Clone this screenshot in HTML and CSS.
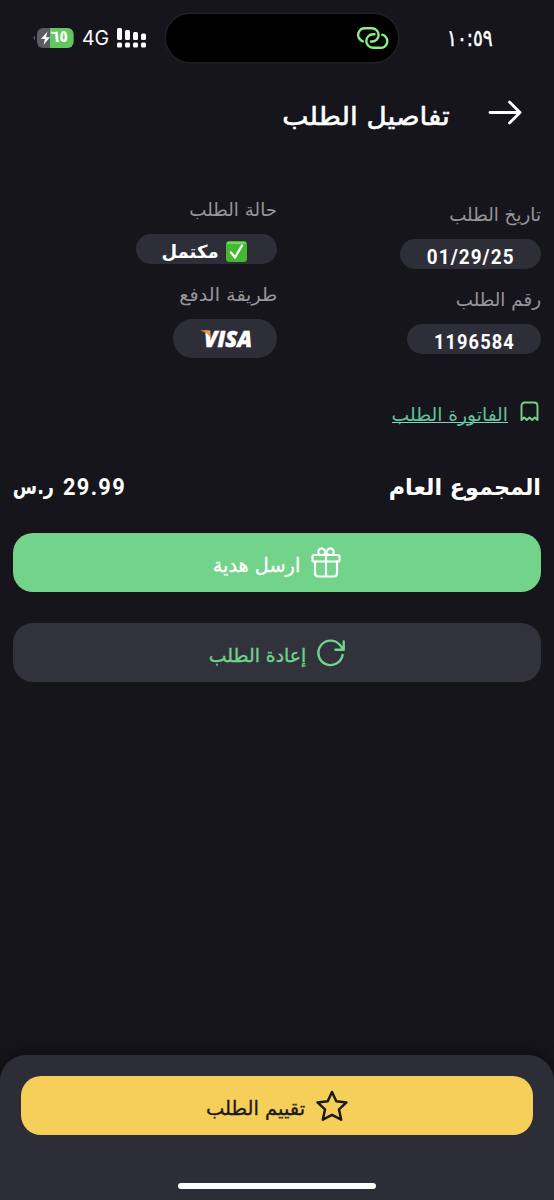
FILE: index.html
```html
<!DOCTYPE html>
<html lang="ar" dir="rtl">
<head>
<meta charset="utf-8">
<title>تفاصيل الطلب</title>
<link rel="stylesheet" href="styles.css">
</head>
<body>
<div class="screen">
  <div class="status">
    <span class="clock" dir="ltr">١٠:٥٩</span>
    <div class="island">
      <svg class="link-icon" viewBox="0 0 29 22" fill="none" stroke="#86f283" stroke-width="2.4" stroke-linecap="round"><path d="M4.800 14.300A6.700 6.700 0 0 1 7.900 1.300H14A6.600 6.600 0 0 1 14 14.500H13"/><path d="M24.300 7.700A6.700 6.700 0 0 1 21 20.700H15A6.700 6.700 0 0 1 15 7.300H16.500"/></svg>
    </div>
    <div class="indicators" dir="ltr">
      <svg class="battery" viewBox="0 0 41 20"><path d="M2 7.500Q-1 10 2 12.500Z" fill="#5c5c60"/><rect x="4" width="36.500" height="20" rx="6" fill="#5c5c60"/><path d="M17 0H34.500A6 6 0 0 1 40.500 6V14A6 6 0 0 1 34.500 20H17Z" fill="#61c75f"/><path d="M14.500 3.500L8 11H12L10.500 17L17 9.300H13Z" fill="#fff"/></svg>
      <span class="charge">٦٥</span>
      <span class="network">4G</span>
      <svg class="signal" viewBox="0 0 29 20" fill="#fff"><rect x="0" y="0" width="5" height="12" rx="1.500"/><rect x="8" y="2" width="5" height="10" rx="1.500"/><rect x="16" y="4" width="5" height="8" rx="1.500"/><rect x="24" y="5.500" width="5" height="6.500" rx="1.500"/><rect x="0" y="14.500" width="5" height="5" rx="1.500"/><rect x="8" y="14.500" width="5" height="5" rx="1.500"/><rect x="16" y="14.500" width="5" height="5" rx="1.500"/><rect x="24" y="14.500" width="5" height="5" rx="1.500"/></svg>
    </div>
  </div>

  <header class="header">
    <svg class="arrow" viewBox="0 0 34 26" fill="none" stroke="#fff" stroke-width="2.800" stroke-linecap="round" stroke-linejoin="round"><path d="M2 12.500H32M21.500 2L32 12.500L21.500 23"/></svg>
    <h1 class="title">تفاصيل الطلب</h1>
  </header>

  <section class="details">
    <div class="column column-start">
      <div class="label">تاريخ الطلب</div>
      <div class="pill pill-date"><span class="digits">01/29/25</span></div>
      <div class="label">رقم الطلب</div>
      <div class="pill pill-number"><span class="digits">1196584</span></div>
    </div>
    <div class="column">
      <div class="label">حالة الطلب</div>
      <div class="pill pill-status">
        <svg class="check" viewBox="0 0 21 21"><rect width="21" height="21" rx="3.500" fill="#45b934"/><rect x="1" y="1" width="19" height="2" rx="1" fill="#79d468"/><path d="M5 11.500L9 16.500L16 4.500" fill="none" stroke="#fff" stroke-width="2.300" stroke-linecap="round" stroke-linejoin="round"/></svg>
        <span class="state">مكتمل</span>
      </div>
      <div class="label label-payment">طريقة الدفع</div>
      <div class="pill pill-visa">
        <svg class="visa" viewBox="0 0 52 20"><text class="visa-text" x="3" y="18.200" textLength="48" lengthAdjust="spacingAndGlyphs" direction="ltr">VISA</text><path d="M0 1.200H6Q8.500 1.200 9 3.500L10.500 10.500Q7 3.500 0 1.700Z" fill="#e8943a"/></svg>
      </div>
    </div>
  </section>

  <a class="invoice">
    <svg class="receipt" viewBox="0 0 19 21" fill="none" stroke="#70d389" stroke-width="1.900" stroke-linejoin="round"><path d="M1.500 19V5Q1.500 1.500 5 1.500H14Q17.500 1.500 17.500 5V19L14.800 16.500L12.200 19L9.500 16.500L6.800 19L4.200 16.500Z"/></svg>
    <span class="invoice-text">الفاتورة الطلب</span>
  </a>

  <div class="total">
    <span class="total-label">المجموع العام</span>
    <span class="total-price"><span class="amount">29.99</span><span class="currency">ر.س</span></span>
  </div>

  <div class="actions">
    <button class="button gift">
      <svg class="gift-icon" viewBox="0 0 30 30" fill="none" stroke="#fff" stroke-width="2.200" stroke-linejoin="round" stroke-linecap="round"><rect x="1.500" y="7" width="27" height="6.500" rx="1.500"/><path d="M4 13.500V25Q4 28.500 7.500 28.500H22.500Q26 28.500 26 25V13.500M15 7V28.500M8.500 6.500A3.400 3.400 0 1 1 14 3.200Q15 4.500 15 7Q15 4.500 16 3.200A3.400 3.400 0 1 1 21.500 6.500M11 7Q14.500 6.500 15 4M19 7Q15.500 6.500 15 4"/></svg>
      <span class="gift-text">ارسل هدية</span>
    </button>
    <button class="button reorder">
      <svg class="reorder-icon" viewBox="0 0 28 28" fill="none" stroke="#70d389" stroke-width="2.400" stroke-linecap="round" stroke-linejoin="round"><path d="M25.600 16A12.200 12.200 0 1 1 22.500 5.500L26.700 10.700M26.700 2.500V10.700H18.500"/></svg>
      <span class="reorder-text">إعادة الطلب</span>
    </button>
  </div>

  <footer class="sheet">
    <button class="button rate">
      <svg class="star" viewBox="0 0 32 32" fill="none" stroke="#1b1a18" stroke-width="2.500" stroke-linejoin="round"><path d="M16 2L20.300 11.200L30.500 12.400L23 19.400L25.200 29.700L16 24.800L6.800 29.700L9 19.400L1.500 12.400L11.700 11.200Z"/></svg>
      <span class="rate-text">تقييم الطلب</span>
    </button>
    <div class="home"></div>
  </footer>
</div>
</body>
</html>
```
FILE: styles.css
```css
* { box-sizing: border-box; }
body { margin: 0; background: #16151b; }
.screen {
  width: 554px; height: 1200px; overflow: hidden;
  display: flex; flex-direction: column;
  background: #16151b; color: #fff;
  font-family: "DejaVu Sans", sans-serif;
}
svg { display: block; flex: none; overflow: visible; }
span, h1 { white-space: nowrap; }

.status { height: 76px; flex: none; display: grid; grid-template-columns: 156px 232px 166px; align-items: center; }
.clock { justify-self: end; font-size: 23px; line-height: 30px; margin-left: 49px; -webkit-text-stroke: .5px #fff; transform: scaleX(.8); transform-origin: left; }
.island {
  height: 48px; border-radius: 24px; background: #000; box-shadow: 0 0 0 1.5px #202026;
  display: flex; justify-content: flex-start; align-items: center; padding-right: 11px;
}
.link-icon { width: 29px; height: 22px; }
.indicators { display: flex; align-items: center; padding-left: 33px; position: relative; }
.battery { width: 41px; height: 20px; }
.charge { position: absolute; left: 49px; top: -1px; width: 20px; font-size: 17px; line-height: 22px; font-weight: bold; text-align: center; transform: scaleX(.85); }
.network { font-family: Inter, sans-serif; font-size: 19.500px; line-height: 24px; margin-left: 8px; width: 27px; }
.signal { width: 29px; height: 20px; margin-left: 8px; }

.header { height: 74px; flex: none; display: flex; align-items: center; padding-right: 32px; gap: 38px; }
.arrow { width: 34px; height: 26px; }
.title { margin: 0; padding-top: 5px; font-size: 25.500px; line-height: 40px; font-weight: normal; -webkit-text-stroke: .6px #fff; transform: scaleX(1.09); transform-origin: right; }

.details { display: flex; height: 208px; margin-top: 49px; padding-right: 13px; flex: none; }
.column { width: 264px; display: flex; flex-direction: column; align-items: flex-start; }
.column-start { padding-top: 5px; }
.label { font-size: 18.300px; line-height: 22px; height: 35px; color: #96969b; }
.label-payment { transform: scaleX(1.05); transform-origin: right; }
.pill { height: 30px; margin-bottom: 20px; border-radius: 20px; background: #2e2e38; display: flex; align-items: center; justify-content: center; }
.pill-date { width: 141px; }
.pill-number { width: 134px; }
.pill-status { width: 141px; gap: 7px; padding-right: 5px; }
.pill-visa { width: 104px; height: 39px; }
.digits { font-family: Roboto, sans-serif; font-weight: 700; font-size: 20.500px; line-height: 24px; letter-spacing: 1.200px; padding-top: 5px; transform: scaleX(.92); }
.pill-number .digits { transform: scaleX(.89); }
.check { width: 21px; height: 21px; margin-top: 4px; }
.state { font-weight: bold; font-size: 18px; line-height: 24px; padding-top: 6px; }
.visa { width: 52px; height: 20px; margin-left: 3px; }
.visa-text { font: italic 800 23.500px "Open Sans", sans-serif; fill: #fff; stroke: #fff; stroke-width: .5px; }

.invoice { display: flex; align-items: center; height: 26px; margin-top: -9px; padding-right: 15px; gap: 12px; color: #5fc49a; flex: none; }
.receipt { width: 19px; height: 21px; }
.invoice-text { font-size: 18.700px; line-height: 24px; height: 20px; margin-top: 4px; border-bottom: 1px solid #8fd0b8; }

.total { height: 40px; margin-top: 43px; padding: 0 13px; display: flex; justify-content: space-between; align-items: center; flex: none; }
.total-label { font-weight: bold; font-size: 22.300px; }
.total-price { display: flex; align-items: center; gap: 10px; width: 113px; justify-content: space-between; font-weight: bold; padding-bottom: 1px; }
.amount { font-family: Roboto, sans-serif; font-size: 24.500px; letter-spacing: 1.500px; width: 61px; transform: scaleX(.89); transform-origin: right; direction: ltr; display: flex; justify-content: flex-end; }
.currency { font-size: 21px; width: 41px; transform: scaleX(.84); transform-origin: right; }

.actions { margin-top: 26px; padding: 0 13px; display: flex; flex-direction: column; gap: 31px; flex: none; }
.button { height: 59px; width: 100%; padding: 0; border: 0; border-radius: 20px; display: flex; align-items: center; justify-content: center; gap: 11px; color: #fff; font-family: inherit; font-size: 19px; }
.button span { padding-top: 5px; -webkit-text-stroke: .35px currentColor; }
.gift { background: #72d38a; font-size: 19.300px; }
.reorder { background: #32323c; color: #70d389; font-size: 18.800px; }
.gift-icon { width: 30px; height: 30px; }
.reorder-icon { width: 28px; height: 28px; }

.sheet { margin-top: auto; height: 145px; flex: none; padding: 21px 21px 11px; border-radius: 26px 26px 0 0; background: #2d2d37; box-shadow: 0 -2px 14px #0e0d12; display: flex; flex-direction: column; justify-content: space-between; align-items: center; }
.rate { background: #f6cf5b; color: #1b1a18; font-size: 19.500px; }
.star { width: 32px; height: 32px; }
.home { width: 198px; height: 6px; border-radius: 3px; background: #fff; }
```
